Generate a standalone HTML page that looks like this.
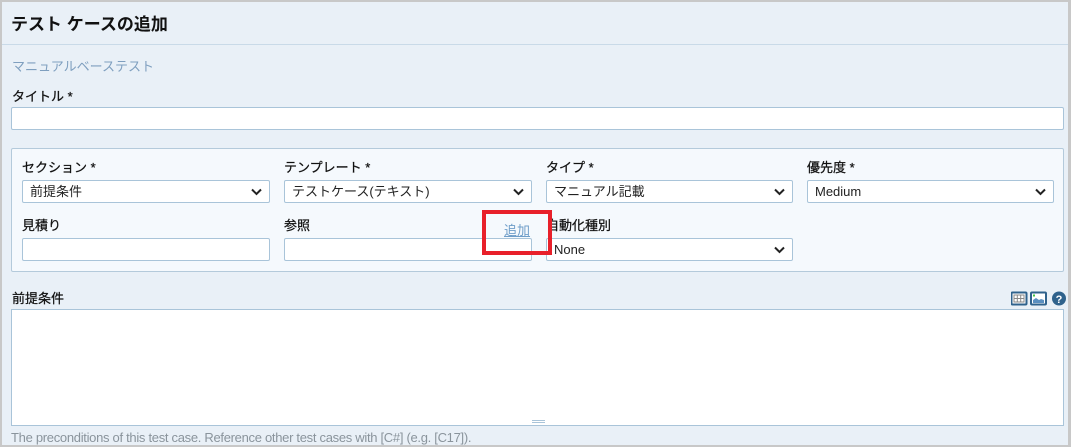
<!DOCTYPE html>
<html><head><meta charset="utf-8"><style>
*{box-sizing:border-box;margin:0;padding:0}
body{width:1071px;height:447px;overflow:hidden;background:#c8c8c8;font-family:"Liberation Sans","Noto Sans CJK JP",sans-serif;position:relative}
.wrap{position:absolute;left:2px;top:2px;width:1066px;height:443px;background:#e9f0f7}
.a{position:absolute}
.hdr{left:0;top:0;width:1066px;height:43px;border-bottom:1px solid #c9dae8}
.lbl{font-size:13px;color:#111;font-weight:normal;-webkit-text-stroke:0.25px #111}
.inp{background:#fff;border:1px solid #a9c4d9;border-radius:2px}
.sel{background:#fff;border:1px solid #a9c4d9;border-radius:2px;font-size:13px;color:#222;padding:3px 7px;line-height:15px}
.sel svg{position:absolute;right:7px;top:7px}
</style></head><body>
<div class="wrap">
<div class="a hdr"></div>
<div class="a" style="left:9px;top:8px;font-size:17px;font-weight:bold;color:#111">テスト ケースの追加</div>
<div class="a" style="left:10px;top:54px;font-size:13px;color:#7f9fbf">マニュアルベーステスト</div>
<div class="a lbl" style="left:10px;top:84px">タイトル *</div>
<div class="a inp" style="left:9px;top:105px;width:1053px;height:23px"></div>
<div class="a" style="left:9px;top:146px;width:1053px;height:124px;background:#f5f9fd;border:1px solid #b4cadb;border-radius:2px"></div>
<div class="a lbl" style="left:20px;top:155px">セクション *</div>
<div class="a lbl" style="left:282px;top:155px">テンプレート *</div>
<div class="a lbl" style="left:544px;top:155px">タイプ *</div>
<div class="a lbl" style="left:805px;top:155px">優先度 *</div>
<div class="a sel" style="left:20px;top:178px;width:248px;height:23px">前提条件<svg width="11" height="8" viewBox="0 0 11 8"><path d="M1 1.5L5.5 6 10 1.5" fill="none" stroke="#222" stroke-width="2"/></svg></div>
<div class="a sel" style="left:282px;top:178px;width:248px;height:23px">テストケース(テキスト)<svg width="11" height="8" viewBox="0 0 11 8"><path d="M1 1.5L5.5 6 10 1.5" fill="none" stroke="#222" stroke-width="2"/></svg></div>
<div class="a sel" style="left:544px;top:178px;width:247px;height:23px">マニュアル記載<svg width="11" height="8" viewBox="0 0 11 8"><path d="M1 1.5L5.5 6 10 1.5" fill="none" stroke="#222" stroke-width="2"/></svg></div>
<div class="a sel" style="left:805px;top:178px;width:247px;height:23px">Medium<svg width="11" height="8" viewBox="0 0 11 8"><path d="M1 1.5L5.5 6 10 1.5" fill="none" stroke="#222" stroke-width="2"/></svg></div>
<div class="a lbl" style="left:20px;top:213px">見積り</div>
<div class="a lbl" style="left:282px;top:213px">参照</div>
<div class="a lbl" style="left:544px;top:213px">自動化種別</div>
<div class="a inp" style="left:20px;top:236px;width:248px;height:23px"></div>
<div class="a inp" style="left:282px;top:236px;width:248px;height:23px"></div>
<div class="a sel" style="left:544px;top:236px;width:247px;height:23px">None<svg width="11" height="8" viewBox="0 0 11 8"><path d="M1 1.5L5.5 6 10 1.5" fill="none" stroke="#222" stroke-width="2"/></svg></div>
<div class="a" style="left:502px;top:218px;font-size:13px;color:#6f9ec9;text-decoration:underline">追加</div>
<div class="a" style="left:480px;top:208px;width:70px;height:45px;border:4px solid #e8202a"></div>
<div class="a lbl" style="left:10px;top:286px">前提条件</div>
<svg class="a" style="left:1009px;top:289px" width="56" height="15" viewBox="0 0 56 15">
<rect x="0.5" y="1.5" width="15" height="12" rx="1" fill="#fff" stroke="#2f628c" stroke-width="2"/>
<path d="M3 4h10v7H3zM3 7.5h10M6.3 4v7M9.7 4v7" fill="none" stroke="#888" stroke-width="1"/>
<rect x="20" y="1.5" width="15" height="12" rx="1" fill="#fff" stroke="#2f628c" stroke-width="2"/>
<rect x="22" y="3.5" width="2" height="2" fill="#3ec13e"/>
<path d="M22 12V9l3-2 3 2 2-1 3 1v3z" fill="#5a8fc0"/>
<circle cx="48" cy="7.5" r="7" fill="#2f628c"/>
<text x="48" y="12" font-size="11" font-weight="bold" fill="#fff" text-anchor="middle" font-family="Liberation Sans,sans-serif">?</text>
</svg>
<div class="a inp" style="left:9px;top:307px;width:1053px;height:117px;border-radius:0"></div>
<div class="a" style="left:530px;top:418px;width:13px;height:3px;border-top:1px solid #a9c4d9;border-bottom:1px solid #a9c4d9"></div>
<div class="a" style="left:9px;top:428px;font-size:13px;color:#8a949c;letter-spacing:-0.3px">The preconditions of this test case. Reference other test cases with [C#] (e.g. [C17]).</div>
</div>
</body></html>
